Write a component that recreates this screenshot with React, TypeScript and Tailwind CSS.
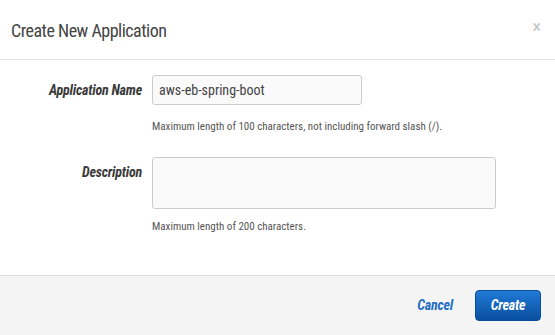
import { useState } from "react";

const narrow = { fontFamily: '"Liberation Sans Narrow", "Roboto Condensed", Roboto, sans-serif' };

export default function App() {
    const [name, setName] = useState("aws-eb-spring-boot");
    const [desc, setDesc] = useState("");

    return (
        <div className="w-[555px] h-[335px] bg-white flex flex-col text-[#333]" style={narrow}>
            {/* header */}
            <div className="h-[60px] border-b border-[#e4e4e4] flex items-center justify-between pl-[11px] pr-[14px]">
                <h1 className="text-[18px] tracking-[-0.5px] text-[#444] mt-[2px]">Create New Application</h1>
                <button className="text-[#c4c4c4] text-[18px] leading-none -mt-[6px]">×</button>
            </div>

            {/* form */}
            <div className="flex-1 pt-[15px]">
                <div className="grid grid-cols-[142px_1fr] gap-x-[10px]">
                    <label className="text-right font-bold italic text-[14px] tracking-[-0.2px] text-[#3a3a3a] leading-[30px]">
                        Application Name
                    </label>
                    <div>
                        <input
                            value={name}
                            onChange={(e) => setName(e.target.value)}
                            className="w-[210px] h-[30px] border border-[#ccc] rounded-[3px] bg-[#fafafa] px-[6px] text-[14px] text-[#444] outline-none"
                        />
                        <p className="text-[11px] text-[#555] mt-[14px]">
                            Maximum length of 100 characters, not including forward slash (/).
                        </p>
                    </div>

                    <label className="text-right font-bold italic text-[14px] tracking-[-0.2px] text-[#3a3a3a] leading-[30px] mt-[21px]">
                        Description
                    </label>
                    <div className="mt-[21px]">
                        <textarea
                            value={desc}
                            onChange={(e) => setDesc(e.target.value)}
                            className="block w-[344px] h-[52px] border border-[#ccc] rounded-[3px] bg-[#fafafa] px-[6px] text-[14px] resize-none outline-none"
                        />
                        <p className="text-[11px] text-[#555] mt-[10px]">Maximum length of 200 characters.</p>
                    </div>
                </div>
            </div>

            {/* footer */}
            <div className="h-[60px] border-t border-[#e0e0e0] bg-[#f4f4f4] flex items-center justify-end gap-[22px] pr-[14px]">
                <button className="text-[#1f6fc5] font-bold italic text-[14px] tracking-[-0.2px]">Cancel</button>
                <button className="w-[66px] h-[31px] rounded-[4px] bg-gradient-to-b from-[#1f7ad6] to-[#0a4f9f] border border-[#0a4c99] text-white font-bold italic text-[14px] tracking-[-0.2px]">
                    Create
                </button>
            </div>
        </div>
    );
}
